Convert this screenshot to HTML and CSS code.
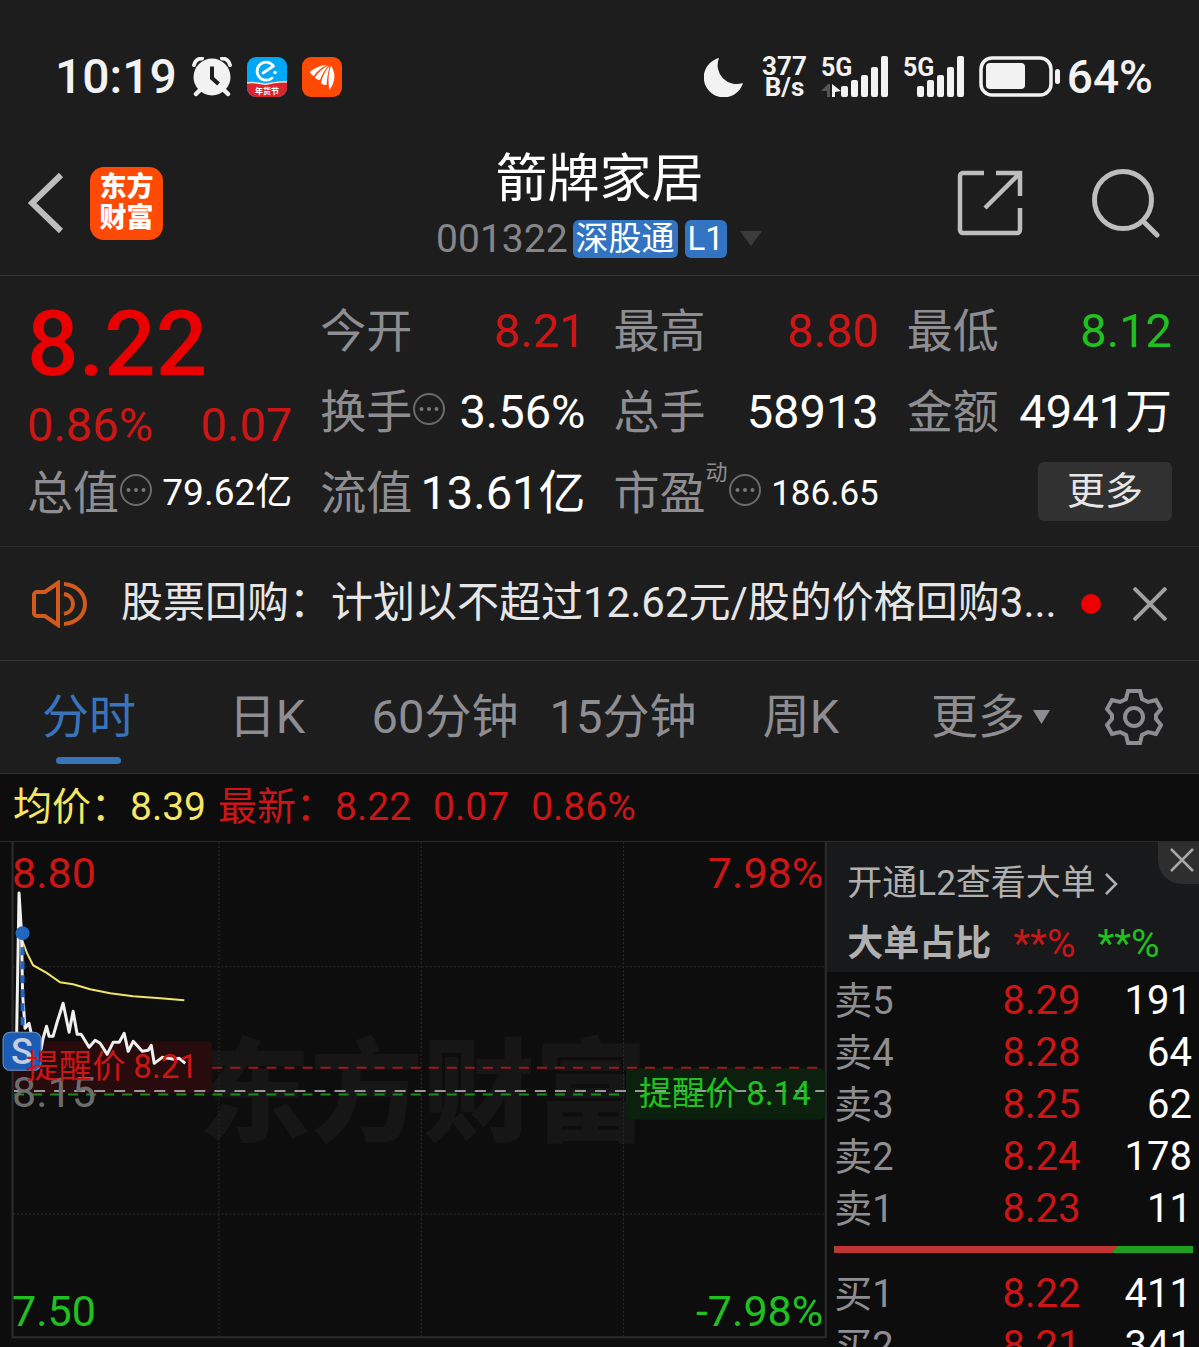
FILE: index.html
```html
<!DOCTYPE html>
<html lang="zh-CN">
<head>
  <meta charset="UTF-8" />
  <meta name="viewport" content="width=device-width, initial-scale=1" />
  <title>箭牌家居 001322</title>
  <link rel="stylesheet" href="styles.css">
</head>
<body>

  <div class="statusbar">
    <div class="status-left">
      <span class="clock">10:19</span>
      <svg class="alarm" width="40" height="40" viewBox="0 0 40 40">
        <circle cx="20" cy="20" r="18.500" fill="#f2f2f2"/>
        <path d="M2 8a8 8 0 0 1 8-6.500M38 8a8 8 0 0 0-8-6.500" stroke="#f2f2f2" stroke-width="4" fill="none" stroke-linecap="round"/>
        <path d="M8 33l-4 4M32 33l4 4" stroke="#f2f2f2" stroke-width="4.500" stroke-linecap="round"/>
        <path d="M20 9.500v11.500l6.500 6" stroke="#1d1d1d" stroke-width="4" fill="none"/>
      </svg>
      <svg width="40" height="40" viewBox="0 0 40 40">
        <rect width="40" height="40" rx="9" fill="#00a8f5"/>
        <path d="M0 26c8-2 14 2 20 1s14-3 20-2v6a9 9 0 0 1-9 9H9a9 9 0 0 1-9-9z" fill="#dc2430"/>
        <path d="M0 26c8-2 14 2 20 1s14-3 20-2" stroke="#ffe0c8" stroke-width="1.500" fill="none"/>
        <path d="M16 16l10.500-7A9 9 0 1 0 25 21" stroke="#fff" stroke-width="2.800" fill="none" stroke-linecap="round" stroke-linejoin="round"/>
        <circle cx="28" cy="15.500" r="1.800" fill="#fff"/>
        <text x="20" y="37" class="tiny">年货节</text>
      </svg>
      <svg width="40" height="40" viewBox="0 0 40 40">
        <rect width="40" height="40" rx="9" fill="#ff4a05"/>
        <path d="M8 14.500c6-4 11-6.500 17-6.500-6 3-10 6-13 11-2.500-.500-3.500-2.500-4-4.500z" fill="#fff"/>
        <path d="M13 20.500c3-5 8-9.500 13.500-12-4 5-6.500 9-8.500 14.500-2.500 0-4-1-5-2.500z" fill="#fff"/>
        <path d="M19 26c1.500-7 4.500-12.500 8.500-17-1.500 7-2.500 12-3 19-2.500 0-4.500-.500-5.500-2z" fill="#fff"/>
        <path d="M29 8.500c5 8 4.500 16-1.500 24.500-1.500-8-1.500-16 1.500-24.500z" fill="#fff"/>
      </svg>
    </div>
    <div class="status-right">
      <svg class="moon" width="40" height="40" viewBox="0 0 40 40">
        <path d="M15 1A20 20 0 1 0 39 26 19 19 0 0 1 15 1z" fill="#f2f2f2"/>
      </svg>
      <div class="speed"><span>377</span><span>B/s</span></div>
      <svg class="signal" width="68" height="42" viewBox="0 0 68 42">
        <text x="0" y="20" class="net">5G</text>
        <path d="M0 35l7-7h2v13H6v-6z" fill="#555"/>
        <path d="M11 28l9 7-6 1v5h-3z" fill="#f2f2f2"/>
        <g fill="#f2f2f2">
          <rect x="20" y="30" width="7" height="11" rx="2"/><rect x="30" y="24" width="7" height="17" rx="2"/>
          <rect x="40" y="19" width="7" height="22" rx="2"/><rect x="50" y="11" width="7" height="30" rx="2"/>
          <rect x="60" y="0" width="7" height="41" rx="2"/>
        </g>
      </svg>
      <svg class="signal" width="62" height="42" viewBox="0 0 62 42">
        <text x="0" y="20" class="net">5G</text>
        <g fill="#f2f2f2">
          <rect x="14" y="30" width="7" height="11" rx="2"/><rect x="24" y="24" width="7" height="17" rx="2"/>
          <rect x="34" y="19" width="7" height="22" rx="2"/><rect x="44" y="11" width="7" height="30" rx="2"/>
          <rect x="54" y="0" width="7" height="41" rx="2"/>
        </g>
      </svg>
      <svg class="battery" width="82" height="42" viewBox="0 0 82 42">
        <rect x="2" y="2" width="70" height="37" rx="11" fill="none" stroke="#f2f2f2" stroke-width="3.500"/>
        <rect x="7" y="7" width="39" height="26" rx="4" fill="#f2f2f2"/>
        <rect x="76" y="13" width="5" height="15" rx="2.500" fill="#f2f2f2"/>
      </svg>
      <span class="percent">64%</span>
    </div>
  </div>

  <header class="header">
    <div class="header-left">
      <button class="icon-btn" aria-label="返回">
        <svg width="36" height="62" viewBox="0 0 36 62"><path d="M33 3L4 31l29 28" stroke="#bdbdbd" stroke-width="6" fill="none"/></svg>
      </button>
      <a href="#" class="logo"><span>东方</span><span>财富</span></a>
    </div>
    <div class="title">
      <h1>箭牌家居</h1>
      <div class="subtitle">
        <span class="code">001322</span>
        <span class="tag">深股通</span>
        <span class="tag">L1</span>
        <svg class="caret" width="24" height="16" viewBox="0 0 24 16"><path d="M1 0h22L12 15z" fill="#3b3b3b"/></svg>
      </div>
    </div>
    <div class="header-right">
      <button class="icon-btn" aria-label="分享">
        <svg width="66" height="66" viewBox="0 0 66 66" fill="none" stroke="#bdbdbd" stroke-width="4.500">
          <path d="M27 3H6a3 3 0 0 0-3 3v54a3 3 0 0 0 3 3h54a3 3 0 0 0 3-3V38M39 3h24v23M62 4L28 38"/>
        </svg>
      </button>
      <button class="icon-btn" aria-label="搜索">
        <svg width="70" height="70" viewBox="0 0 70 70" fill="none" stroke="#bdbdbd" stroke-width="5">
          <circle cx="32" cy="32" r="28.500"/><path d="M52 53l14 14" stroke-linecap="round"/>
        </svg>
      </button>
    </div>
  </header>

  <section class="quote">
    <div class="price-box">
      <div class="price">8.22</div>
      <div class="change"><span>0.86%</span><span>0.07</span></div>
    </div>
    <div class="item"><span class="label">今开</span><span class="value red">8.21</span></div>
    <div class="item"><span class="label">最高</span><span class="value red">8.80</span></div>
    <div class="item"><span class="label">最低</span><span class="value green">8.12</span></div>
    <div class="item"><span class="label">换手</span><svg class="dots" viewBox="0 0 34 34"><circle cx="17" cy="17" r="15" class="ring"/><circle cx="9.500" cy="17" r="2"/><circle cx="17" cy="17" r="2"/><circle cx="24.500" cy="17" r="2"/></svg><span class="value">3.56%</span></div>
    <div class="item"><span class="label">总手</span><span class="value">58913</span></div>
    <div class="item"><span class="label">金额</span><span class="value">4941万</span></div>
    <div class="item"><span class="label">总值</span><svg class="dots" viewBox="0 0 34 34"><circle cx="17" cy="17" r="15" class="ring"/><circle cx="9.500" cy="17" r="2"/><circle cx="17" cy="17" r="2"/><circle cx="24.500" cy="17" r="2"/></svg><span class="value small">79.62亿</span></div>
    <div class="item"><span class="label">流值</span><span class="value">13.61亿</span></div>
    <div class="item"><span class="label">市盈</span><span class="sup">动</span><svg class="dots" viewBox="0 0 34 34"><circle cx="17" cy="17" r="15" class="ring"/><circle cx="9.500" cy="17" r="2"/><circle cx="17" cy="17" r="2"/><circle cx="24.500" cy="17" r="2"/></svg><span class="value smaller">186.65</span></div>
    <div class="item"><button class="more-btn">更多</button></div>
  </section>

  <div class="notice">
    <svg width="56" height="48" viewBox="0 0 56 48" fill="none" stroke="#d25a1c" stroke-width="4">
      <path d="M26 3L13 12H5a3 3 0 0 0-3 3v18a3 3 0 0 0 3 3h8l13 9zM32 14c12 2 12 18 0 20M32 4c28 2 28 38 0 40"/>
    </svg>
    <a href="#" class="notice-text">股票回购：计划以不超过12.62元/股的价格回购3...</a>
    <span class="dot"></span>
    <button class="icon-btn" aria-label="关闭">
      <svg width="34" height="34" viewBox="0 0 34 34"><path d="M1 1l32 32M33 1L1 33" stroke="#a0a0a0" stroke-width="4"/></svg>
    </button>
  </div>

  <nav class="tabs">
    <button class="tab active">分时</button>
    <button class="tab">日K</button>
    <button class="tab">60分钟</button>
    <button class="tab">15分钟</button>
    <button class="tab">周K</button>
    <button class="tab tab-more">更多<svg width="17" height="14" viewBox="0 0 17 14"><path d="M0 0h17L8.500 14z" fill="#8e8e92"/></svg></button>
    <button class="settings" aria-label="设置">
      <svg width="58" height="58" viewBox="0 0 58 58" fill="none" stroke="#8e8e92" stroke-width="4">
        <path d="M23 3h12l2 8 6 3 8-2 5 9-5 6v4l5 6-5 9-8-2-6 3-2 8H23l-2-8-6-3-8 2-5-9 5-6v-4l-5-6 5-9 8 2 6-3z"/>
        <circle cx="29" cy="29" r="9"/>
      </svg>
    </button>
  </nav>

  <div class="info">
    <span class="yellow">均价：8.39</span>
    <span class="red latest"><span>最新：8.22</span><span>0.07</span><span>0.86%</span></span>
  </div>

  <main class="main">
    <svg class="chart" viewBox="0 0 826 505">
      <text x="422" y="291" class="watermark">东方财富</text>

      <!-- grid -->
      <g class="grid">
        <path d="M218.500 0v494M420.500 0v494M622.500 0v494M13 124.500h812M13 371.500h812"/>
      </g>
      <path d="M12.500 0v494.500h812V0" class="frame"/>

      <!-- price alerts -->
      <rect x="14" y="199" width="198" height="52" rx="5" fill="#270b0d"/>
      <rect x="625" y="226" width="199" height="51" rx="5" fill="#0c200e"/>
      <path d="M212 225.500h610" class="dash-red"/>
      <path d="M14 248.500h809" class="dash-gray"/>
      <path d="M14 252h608" class="dash-green"/>

      <!-- average and price lines -->
      <path d="M22 98l5 13 6 12 14 8 13 9 13 2 17 5 20 4 23 3 27 2 24 2" class="line-avg"/>
      <path d="M16.500 200L19 51l2.500 40 1 60 2.500 35 4-5 3 14 9 12 2-11 3.500-12 2.500 10h4l4-14 6-19 6 29 4-21 4 23h4l8 13 6-7 5 3 7 11 6-12h6l5-9 4 18 5-10 9 10 6-1 3-5 3 18 8-6 12 2 5-1 6 5" class="line-price"/>
      <path d="M22.500 105v80" class="dash-blue"/>
      <circle cx="22.500" cy="91" r="7" fill="#2366bd"/>

      <text x="12" y="265" class="axis gray">8.15</text>
      <rect x="3" y="190" width="38" height="38" rx="7" fill="#1d5cb5" stroke="#6f93c4"/>
      <text x="22" y="222" class="badge">S</text>
      <text x="26" y="236" class="alert red">提醒价 8.21</text>
      <text x="638" y="263" class="alert green">提醒价 8.14</text>

      <text x="12" y="46" class="axis red">8.80</text>
      <text x="822" y="46" class="axis red end">7.98%</text>
      <text x="12" y="483" class="axis green">7.50</text>
      <text x="822" y="483" class="axis green end">-7.98%</text>
    </svg>

    <aside class="panel">
      <div class="panel-head">
        <a href="#" class="l2">开通L2查看大单<svg width="14" height="24" viewBox="0 0 14 24"><path d="M2 2l10 10L2 22" stroke="#b0b0b0" stroke-width="2.500" fill="none"/></svg></a>
        <div class="ratio"><b>大单占比</b><span class="red">**%</span><span class="green">**%</span></div>
        <button class="panel-close" aria-label="关闭">
          <svg width="24" height="24" viewBox="0 0 24 24"><path d="M1 1l22 22M23 1L1 23" stroke="#a8a8a8" stroke-width="2.500"/></svg>
        </button>
      </div>
      <table class="book">
        <tr><th>卖5</th><td class="red">8.29</td><td>191</td></tr>
        <tr><th>卖4</th><td class="red">8.28</td><td>64</td></tr>
        <tr><th>卖3</th><td class="red">8.25</td><td>62</td></tr>
        <tr><th>卖2</th><td class="red">8.24</td><td>178</td></tr>
        <tr><th>卖1</th><td class="red">8.23</td><td>11</td></tr>
      </table>
      <div class="bar"><div class="bar-buy" style="width: 79%"></div></div>
      <table class="book">
        <tr><th>买1</th><td class="red">8.22</td><td>411</td></tr>
        <tr><th>买2</th><td class="red">8.21</td><td>341</td></tr>
      </table>
    </aside>
  </main>

</body>
</html>
```
FILE: styles.css
```css
* {
  box-sizing: border-box;
}
body {
  margin: 0;
  height: 100vh;
  overflow: hidden;
  display: flex;
  flex-direction: column;
  background-color: #1d1d1d;
  color: #fff;
  font-family: Roboto, "Noto Sans CJK SC", sans-serif;
  line-height: 1.2;
}
button {
  border: none;
  padding: 0;
  background: none;
  color: inherit;
  font-family: inherit;
  line-height: inherit;
  cursor: pointer;
}
a {
  color: inherit;
  text-decoration: none;
}
svg {
  display: block;
  flex-shrink: 0;
}
.red {
  color: #cc1616;
  fill: #cc1616;
}
.green {
  color: #20c020;
  fill: #20c020;
}
.yellow {
  color: #f5e663;
}

/* Status bar */
.statusbar {
  display: flex;
  justify-content: space-between;
  padding: 52px 46px 0 55px;
  color: #f2f2f2;
  font-weight: 500;
  line-height: 50px;
}
.status-left, .status-right {
  display: flex;
  align-items: center;
  height: 50px;
}
.status-left {
  gap: 15px;
  font-size: 48px;
}
.status-right {
  gap: 14px;
}
.speed {
  display: flex;
  flex-direction: column;
  align-items: center;
  margin-left: 4px;
  font-size: 26px;
  font-weight: 700;
  line-height: 21px;
}
.signal {
  overflow: visible;
}
.percent {
  margin-left: -8px;
  font-size: 46px;
}
.net {
  font-size: 25px;
  font-weight: 700;
  fill: #f2f2f2;
}
.tiny {
  font-size: 8px;
  font-weight: 700;
  fill: #fff;
  text-anchor: middle;
}

/* Header */
.header {
  display: grid;
  grid-template-columns: 1fr auto 1fr;
  align-items: center;
  padding: 45px 28px 16px;
  border-bottom: 1px solid #333;
}
.header-left, .header-right {
  display: flex;
  align-items: center;
}
.header-left {
  gap: 26px;
}
.header-right {
  justify-content: flex-end;
  gap: 68px;
  padding-right: 10px;
}
.logo {
  display: flex;
  flex-direction: column;
  justify-content: center;
  align-items: center;
  width: 73px;
  height: 73px;
  border-radius: 14px;
  background-color: #ff4a05;
  font-size: 27px;
  font-weight: 900;
  line-height: 31px;
}
.title {
  text-align: center;
}
.title h1 {
  margin: 0 0 6px;
  font-size: 52px;
  font-weight: 400;
  line-height: 66px;
}
.subtitle {
  display: flex;
  align-items: center;
  justify-content: center;
  height: 40px;
}
.code {
  margin-right: 5px;
  color: #85858a;
  font-size: 39px;
}
.tag {
  margin-right: 7px;
  padding: 0 3px;
  border-radius: 6px;
  background-color: #3274c2;
  font-size: 33px;
  line-height: 38px;
}
.caret {
  margin-left: 5px;
}

/* Quote */
.quote {
  display: grid;
  grid-template-columns: repeat(4, 1fr);
  grid-auto-rows: 81px;
  column-gap: 28px;
  padding: 15px 27px 12px;
  border-bottom: 1px solid #2a2a2a;
}
.price-box {
  grid-row: span 2;
}
.price {
  color: #e90000;
  font-size: 91px;
  font-weight: 500;
  line-height: 106px;
}
.change {
  display: flex;
  justify-content: space-between;
  color: #cc1616;
  font-size: 47px;
  line-height: 56px;
}
.item {
  display: flex;
  align-items: center;
  white-space: nowrap;
}
.label {
  color: #8e8e92;
  font-size: 46px;
}
.value {
  margin-left: auto;
  font-size: 47px;
}
.small {
  font-size: 37px;
}
.smaller {
  font-size: 35px;
}
.sup {
  align-self: flex-start;
  margin-top: 7px;
  color: #8e8e92;
  font-size: 22px;
}
.dots {
  width: 34px;
  height: 34px;
  margin-bottom: 8px;
  fill: #77777b;
}
.ring {
  fill: none;
  stroke: #6b6b6e;
  stroke-width: 2;
}
.more-btn {
  width: 134px;
  height: 59px;
  margin: 0 0 4px auto;
  border-radius: 6px;
  background-color: #313131;
  color: #e6e6e6;
  font-size: 38px;
}

/* Notice */
.notice {
  display: flex;
  align-items: center;
  height: 114px;
  padding: 0 32px;
  border-bottom: 1px solid #333;
}
.notice-text {
  flex: 1;
  min-width: 0;
  margin-left: 33px;
  overflow: hidden;
  color: #e6e6e6;
  font-size: 42px;
  white-space: nowrap;
}
.dot {
  width: 20px;
  height: 20px;
  margin: 0 32px 0 16px;
  border-radius: 50%;
  background-color: #ee0000;
}

/* Tabs */
.tabs {
  display: grid;
  grid-template-columns: repeat(6, 1fr) 131px;
  height: 113px;
  border-bottom: 1px solid #333;
}
.tab {
  position: relative;
  color: #8e8e92;
  font-size: 47px;
  white-space: nowrap;
}
.active {
  color: #3774ba;
}
.active::after {
  content: "";
  position: absolute;
  left: 50%;
  bottom: 9px;
  width: 65px;
  height: 7px;
  margin-left: -33px;
  border-radius: 4px;
  background-color: #3774ba;
}
.tab-more {
  display: flex;
  align-items: center;
  justify-content: flex-end;
  gap: 8px;
  padding-right: 18px;
}
.settings {
  display: flex;
  align-items: center;
  justify-content: center;
}

/* Average / latest line */
.info {
  display: flex;
  gap: 12px;
  height: 68px;
  padding-left: 13px;
  border-bottom: 1px solid #2c2c2c;
  background-color: #0d0d0d;
  font-size: 39px;
  line-height: 67px;
}
.latest {
  display: flex;
  gap: 22px;
}

/* Chart */
.main {
  flex: 1;
  display: flex;
  align-items: flex-start;
  min-height: 0;
  background-color: #0d0d0d;
}
.chart {
  flex: 1;
  min-width: 0;
}
.watermark {
  fill: #161616;
  font-size: 112px;
  font-weight: 900;
  text-anchor: middle;
}
.grid {
  fill: none;
  stroke: #2c2c2c;
  stroke-dasharray: 2 2;
}
.frame {
  fill: none;
  stroke: #2c2c2c;
  stroke-width: 2;
}
.dash-red, .dash-gray, .dash-green, .dash-blue, .line-avg, .line-price {
  fill: none;
  stroke-width: 2;
}
.dash-red {
  stroke: #9c1a1a;
  stroke-dasharray: 10 8;
}
.dash-gray {
  stroke: #999;
  stroke-dasharray: 11 9;
}
.dash-green {
  stroke: #1f8a1f;
  stroke-dasharray: 10 8;
}
.dash-blue {
  stroke: #2366bd;
  stroke-width: 4;
  stroke-dasharray: 8 6;
}
.line-avg {
  stroke: #efe36a;
}
.line-price {
  stroke: #f0f0f0;
  stroke-width: 3;
  stroke-linejoin: round;
}
.axis {
  font-size: 43px;
}
.end {
  text-anchor: end;
}
.gray {
  fill: #6c6c6c;
}
.alert {
  font-size: 33px;
}
.badge {
  fill: #c4cede;
  font-size: 36px;
  font-weight: 500;
  text-anchor: middle;
}

/* Order book */
.panel {
  width: 31%;
}
.panel-head {
  position: relative;
  padding: 12px 20px 0;
  height: 130px;
  margin-bottom: 3px;
  background-color: #18191b;
  color: #b0b0b0;
}
.l2 {
  display: flex;
  align-items: center;
  gap: 8px;
  font-size: 35px;
  line-height: 60px;
}
.ratio {
  display: flex;
  gap: 22px;
  font-size: 39px;
  line-height: 60px;
}
.ratio b {
  font-size: 36px;
}
.panel-close {
  position: absolute;
  top: 0;
  right: 0;
  width: 41px;
  height: 42px;
  padding: 0 0 6px 12px;
  border-bottom-left-radius: 24px;
  background-color: #2e2e2f;
}
.book {
  width: 100%;
  border-collapse: collapse;
  table-layout: fixed;
  font-size: 40px;
}
.book th, .book td {
  height: 52px;
  padding: 0 7px 0 0;
  line-height: 52px;
  font-weight: 400;
  text-align: right;
}
.book th {
  width: 34%;
  padding-left: 7px;
  color: #8e8e92;
  font-size: 38px;
  text-align: left;
}
.book th + td {
  width: 36%;
}
.bar {
  height: 7px;
  margin: 11px 6px 15px 7px;
  background-color: #1f9e1f;
}
.bar-buy {
  height: 100%;
  background-color: #c23434;
  clip-path: polygon(0 0, 100% 0, 98% 100%, 0 100%);
}
```
